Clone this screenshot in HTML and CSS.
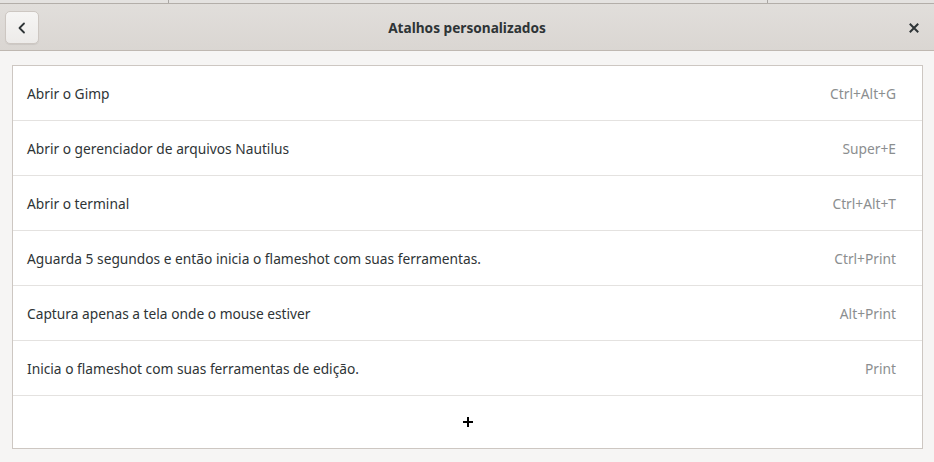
FILE: index.html
```html
<!DOCTYPE html>
<html lang="pt-BR">
<head>
<meta charset="utf-8">
<title>Atalhos personalizados</title>
<link rel="stylesheet" href="styles.css">
</head>
<body>
<div class="window">
  <div class="strip">
    <div class="strip-cell a"></div>
    <div class="strip-cell b"></div>
    <div class="strip-cell c"></div>
  </div>
  <header class="headerbar">
    <div class="hb-start">
      <button class="back-btn" aria-label="Voltar">
        <svg width="16" height="16" viewBox="0 0 16 16"><path d="M10 3.5 L5.5 8 L10 12.5" fill="none" stroke="#2e3436" stroke-width="1.8" stroke-linecap="round" stroke-linejoin="round"/></svg>
      </button>
    </div>
    <h1 class="title">Atalhos personalizados</h1>
    <div class="hb-end">
      <button class="close-btn" aria-label="Fechar">
        <svg width="10" height="10" viewBox="0 0 10 10"><path d="M1.5 1.5 L8.5 8.5 M8.5 1.5 L1.5 8.5" stroke="#2e3436" stroke-width="2" stroke-linecap="square"/></svg>
      </button>
    </div>
  </header>
  <main class="content">
    <div class="list">
      <div class="row"><span class="name">Abrir o Gimp</span><span class="accel">Ctrl+Alt+G</span></div>
      <div class="row"><span class="name">Abrir o gerenciador de arquivos Nautilus</span><span class="accel">Super+E</span></div>
      <div class="row"><span class="name">Abrir o terminal</span><span class="accel">Ctrl+Alt+T</span></div>
      <div class="row"><span class="name">Aguarda 5 segundos e então inicia o flameshot com suas ferramentas.</span><span class="accel">Ctrl+Print</span></div>
      <div class="row"><span class="name">Captura apenas a tela onde o mouse estiver</span><span class="accel">Alt+Print</span></div>
      <div class="row"><span class="name">Inicia o flameshot com suas ferramentas de edição.</span><span class="accel">Print</span></div>
      <div class="row add-row">
        <svg width="12" height="12" viewBox="0 0 12 12"><path d="M6 1 V11 M1 6 H11" stroke="#000" stroke-width="2"/></svg>
      </div>
    </div>
  </main>
</div>
</body>
</html>
```
FILE: styles.css
```css
* { box-sizing: border-box; }
html, body { margin: 0; padding: 0; }
body {
  width: 934px;
  height: 462px;
  overflow: hidden;
  font-family: "Noto Sans", "Open Sans", sans-serif;
  color: #2e3436;
  background: #f6f5f4;
}
.window { display: flex; flex-direction: column; height: 462px; }
.strip {
  height: 4px;
  display: flex;
  background: #e4e2e0;
  border-bottom: 1px solid #b3aea9;
}
.strip-cell { height: 3px; }
.strip-cell.a { width: 169px; border-right: 1px solid #a9a6a3; }
.strip-cell.b { width: 599px; border-right: 1px solid #a9a6a3; }
.strip-cell.c { flex: 1; }
.headerbar {
  height: 47px;
  display: grid;
  grid-template-columns: 1fr auto 1fr;
  align-items: center;
  padding: 0 10px;
  background: linear-gradient(to bottom, #e1dedb, #dad6d2);
  border-bottom: 1px solid #bfb8b1;
}
.hb-start { display: flex; justify-content: flex-start; }
.hb-end { display: flex; justify-content: flex-end; }
.back-btn {
  width: 34px;
  height: 33px;
  margin-top: 1px;
  margin-left: -5px;
  border: 1px solid #cdc7c2;
  border-radius: 5px;
  background: linear-gradient(to bottom, #f6f5f4, #edebe9);
  box-shadow: 0 1px 1px rgba(0,0,0,0.07);
  display: flex;
  align-items: center;
  justify-content: center;
  padding: 0;
}
.title {
  margin: 0;
  text-align: center;
  font-size: 13.65px;
  font-weight: 700;
  color: #2e3436;
}
.close-btn {
  width: 20px;
  height: 22px;
  border: none;
  background: transparent;
  padding: 0;
  display: flex;
  align-items: center;
  justify-content: center;
  margin-top: 1px;
}
.content {
  flex: 1;
  padding: 14px 11px 13px 12px;
}
.list {
  background: #fff;
  border: 1px solid #cdc7c2;
  display: flex;
  flex-direction: column;
}
.row {
  height: 55px;
  display: flex;
  align-items: center;
  justify-content: space-between;
  padding: 0 26px 0 14px;
  border-bottom: 1px solid #e4e2e0;
  font-size: 13.75px;
}
.name { color: #2e3436; }
.accel { color: #8b8e8f; }
.add-row {
  height: 52px;
  border-bottom: none;
  justify-content: center;
  padding: 0;
}
```
